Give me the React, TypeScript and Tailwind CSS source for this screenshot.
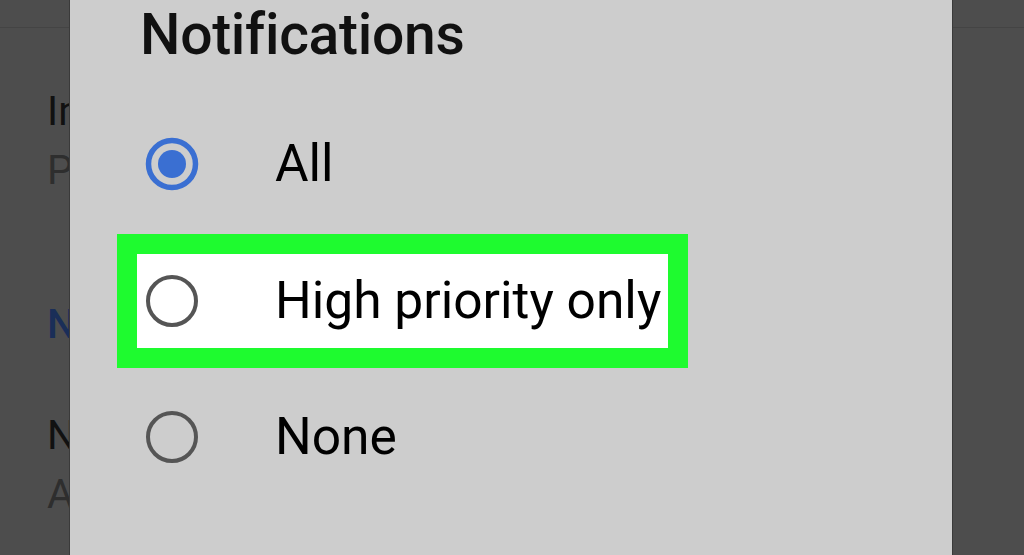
import type { ReactNode } from 'react';

const font = { fontFamily: 'Roboto, "Noto Sans", sans-serif' };

function Radio({ checked }: { checked?: boolean }) {
  if (checked) {
    return (
      <svg width="56" height="56" viewBox="0 0 56 56" className="shrink-0">
        <circle cx="28" cy="28" r="23.5" fill="none" stroke="#3a6fd2" strokeWidth="5.5" />
        <circle cx="28" cy="28" r="14" fill="#3a6fd2" />
      </svg>
    );
  }
  return (
    <svg width="56" height="56" viewBox="0 0 56 56" className="shrink-0">
      <circle cx="28" cy="28" r="24" fill="none" stroke="#555555" strokeWidth="4" />
    </svg>
  );
}

function Option({ label, checked, highlight }: { label: string; checked?: boolean; highlight?: boolean }) {
  return (
    <div
      className={
        highlight
          ? 'ml-[47px] w-[571px] h-[134px] border-[20px] border-[#1efb2f] bg-white flex items-center pl-[7px]'
          : 'ml-[47px] w-[571px] h-[134px] border-[20px] border-transparent flex items-center pl-[7px]'
      }
    >
      <Radio checked={checked} />
      <span className="ml-[75px] text-[51.5px] leading-none text-black whitespace-nowrap">{label}</span>
    </div>
  );
}

function Behind({ children, className }: { children: ReactNode; className: string }) {
  return <div className={'whitespace-nowrap text-[41px] leading-none ' + className}>{children}</div>;
}

export default function App() {
  return (
    <div className="w-[1024px] h-[555px] flex bg-[#4d4d4d] overflow-hidden" style={font}>
      {/* screen behind the dialog */}
      <div className="w-[69px] shrink-0 overflow-hidden flex flex-col">
        <div className="h-[28px] shrink-0 border-b border-[#444444]" />
        <div className="pl-[47px] pt-[63px]">
          <Behind className="text-[#111111]">Importance</Behind>
          <Behind className="text-[#2e2e2e] mt-[18px]">Pop on screen</Behind>
          <Behind className="text-[#1a2e58] font-medium mt-[113px]">Notifications</Behind>
          <Behind className="text-[#111111] mt-[70px]">Notification sound</Behind>
          <Behind className="text-[#2e2e2e] mt-[18px]">Android default</Behind>
        </div>
      </div>

      {/* dialog */}
      <div className="w-[884px] shrink-0 h-full bg-[#cdcdcd] border-x border-[#3a3a3a] flex flex-col">
        <div className="h-[97px] shrink-0 pl-[70px] pt-[6px]">
          <h1 className="text-[57px] leading-none font-medium text-[#111111] tracking-[-0.3px]">Notifications</h1>
        </div>
        <Option label="All" checked />
        <div className="h-[3px]" />
        <Option label="High priority only" highlight />
        <div className="h-[2px]" />
        <Option label="None" />
      </div>

      <div className="flex-1 flex flex-col">
        <div className="h-[28px] shrink-0 border-b border-[#444444]" />
      </div>
    </div>
  );
}
